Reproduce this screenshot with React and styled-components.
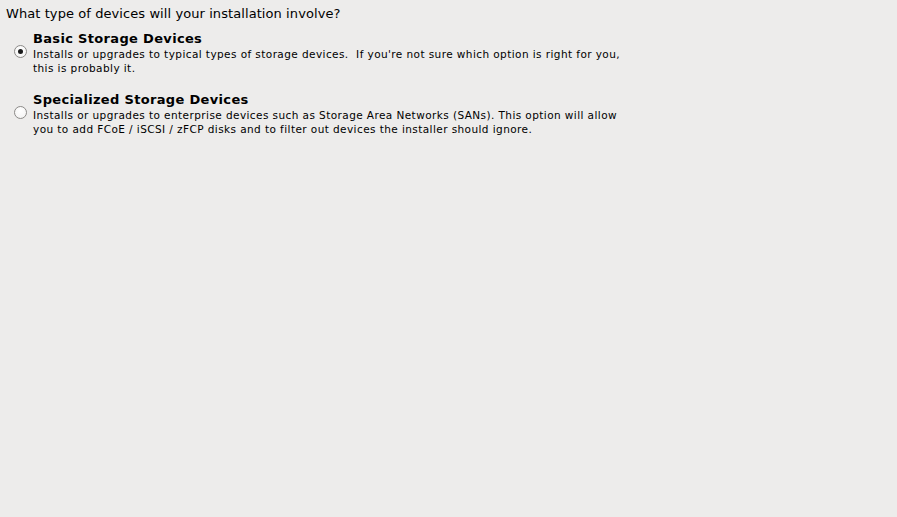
import React from "react";
import styled, { createGlobalStyle } from "styled-components";

const Global = createGlobalStyle`
  html, body { margin: 0; padding: 0; background: #edeceb; }
  body { font-family: "DejaVu Sans", sans-serif; color: #000; }
  #root { min-height: 517px; }
`;

const Page = styled.div`
  padding: 6px 6px 0 6px;
  display: flex;
  flex-direction: column;
`;

const Question = styled.div`
  font-size: 13px;
  line-height: 16px;
  letter-spacing: 0.08px;
  margin-bottom: 8px;
`;

const OptionList = styled.div`
  display: flex;
  flex-direction: column;
  gap: 16px;
`;

const Option = styled.label`
  display: flex;
  align-items: flex-start;
  gap: 7px;
  padding-left: 8px;
  cursor: pointer;
`;

const Radio = styled.span`
  width: 13px;
  height: 13px;
  margin-top: 15px;
  flex: none;
  border-radius: 50%;
  box-sizing: border-box;
  border: 1px solid #8c8a88;
  background: radial-gradient(circle at 50% 35%, #ffffff 0%, #f2f1f0 100%);
  display: flex;
  align-items: center;
  justify-content: center;
  &::after {
    content: "";
    width: 5px;
    height: 5px;
    border-radius: 50%;
    background: ${(p) => (p.$checked ? "#1a1a1a" : "transparent")};
  }
`;

const Text = styled.div`
  display: flex;
  flex-direction: column;
  margin-left: -1px;
`;

const Title = styled.div`
  font-weight: bold;
  font-size: 13px;
  line-height: 17px;
  letter-spacing: 0.33px;
`;

const Desc = styled.div`
  font-size: 10.5px;
  line-height: 14px;
  letter-spacing: 0.42px;
  white-space: pre-wrap;
`;

const options = [
  {
    title: "Basic Storage Devices",
    desc: "Installs or upgrades to typical types of storage devices.  If you're not sure which option is right for you,\nthis is probably it.",
    checked: true,
  },
  {
    title: "Specialized Storage Devices",
    desc: "Installs or upgrades to enterprise devices such as Storage Area Networks (SANs). This option will allow\nyou to add FCoE / iSCSI / zFCP disks and to filter out devices the installer should ignore.",
    checked: false,
  },
];

export default function App() {
  return (
    <>
      <Global />
      <Page>
        <Question>What type of devices will your installation involve?</Question>
        <OptionList>
          {options.map((o) => (
            <Option key={o.title}>
              <Radio $checked={o.checked} />
              <Text>
                <Title>{o.title}</Title>
                <Desc>{o.desc}</Desc>
              </Text>
            </Option>
          ))}
        </OptionList>
      </Page>
    </>
  );
}
